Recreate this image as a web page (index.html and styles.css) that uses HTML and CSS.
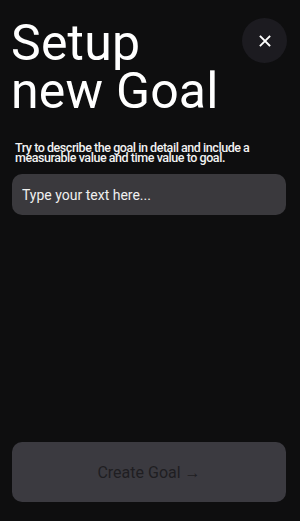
FILE: index.html
```html
<!DOCTYPE html>
<html lang="en">
<head>
  <meta charset="UTF-8">
  <meta name="viewport" content="width=device-width, initial-scale=1.0">
  <title>Setup new Goal</title>
  <link rel="stylesheet" href="styles.css">
</head>
<body>
  <div class="screen">
    <div class="header">
      <h1 class="title">Setup<br>new Goal</h1>
      <button class="close" aria-label="Close">
        <svg width="12" height="12" viewBox="0 0 12 12">
          <path d="M1.5 1.5 L10.5 10.5 M10.5 1.5 L1.5 10.5" stroke="#fff" stroke-width="1.8" stroke-linecap="square"/>
        </svg>
      </button>
    </div>
    <p class="hint">Try to describe the goal in detail and include a measurable value and time value to goal.</p>
    <input class="goal-input" type="text" placeholder="Type your text here...">
    <div class="spacer"></div>
    <button class="create">Create Goal &rarr;</button>
  </div>
</body>
</html>
```

FILE: styles.css
```css
*, *::before, *::after {
  padding: 0;
  margin: 0;
  box-sizing: border-box;
}

body {
  background: #0e0e0f;
  font-family: Roboto, "Noto Sans", sans-serif;
  color: #fff;
}

.screen {
  height: 521px;
  display: flex;
  flex-direction: column;
  padding: 18px 14px 19px 12px;
}

.header {
  display: flex;
  justify-content: space-between;
  align-items: flex-start;
}

.title {
  font-size: 50px;
  font-weight: 400;
  line-height: 48px;
  margin-top: 1px;
  margin-left: -1px;
  letter-spacing: 0.2px;
}

.close {
  width: 45px;
  height: 45px;
  border-radius: 50%;
  border: 0;
  background: #1c1b20;
  display: flex;
  align-items: center;
  justify-content: center;
  margin-right: -1px;
}

.hint {
  font-size: 12.5px;
  font-weight: 500;
  line-height: 10px;
  letter-spacing: -0.45px;
  margin-top: 28px;
  padding-left: 3px;
  padding-right: 20px;
  color: #f2f2f2;
}

.goal-input {
  margin-top: 11px;
  height: 41px;
  width: 100%;
  border: 0;
  border-radius: 10px;
  background: #3a393d;
  padding: 0 10px;
  font-family: Roboto, "Noto Sans", sans-serif;
  font-size: 14px;
  color: #fff;
  outline: none;
}

.goal-input::placeholder {
  color: #f0f0f0;
}

.spacer {
  flex: 1;
}

.create {
  height: 60px;
  width: 100%;
  border: 0;
  border-radius: 10px;
  background: #3b3a40;
  font-family: Roboto, "Noto Sans", sans-serif;
  font-size: 16px;
  color: #1f1e22;
}
```
